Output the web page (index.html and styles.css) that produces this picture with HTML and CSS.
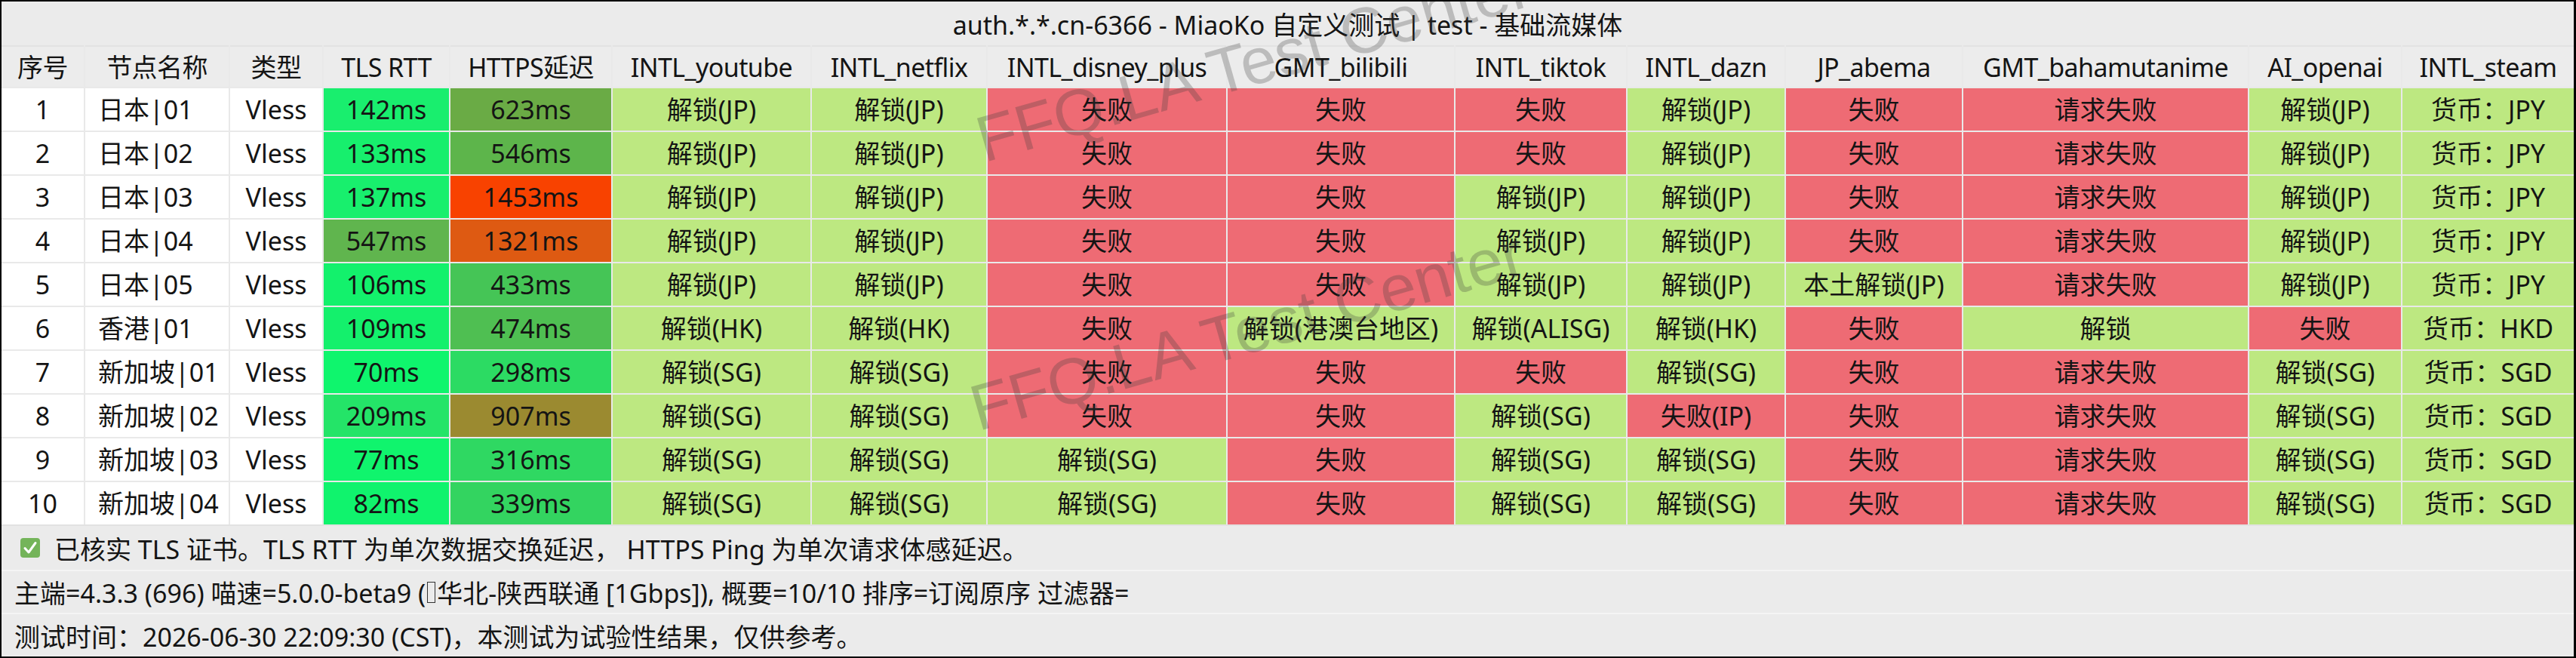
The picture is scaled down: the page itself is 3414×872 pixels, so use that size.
FILE: index.html
```html
<!DOCTYPE html>
<html lang="zh-CN">
<head>
<meta charset="utf-8">
<title>MiaoKo</title>
<link rel="stylesheet" href="styles.css">
</head>
<body>
<div class="frame">
  <div class="title">auth.*.*.cn-6366 - MiaoKo 自定义测试 | test - 基础流媒体</div>
  <div class="table">
    <div class="c h">序号</div><div class="c h">节点名称</div><div class="c h">类型</div><div class="c h">TLS RTT</div><div class="c h">HTTPS延迟</div><div class="c h">INTL_youtube</div><div class="c h">INTL_netflix</div><div class="c h">INTL_disney_plus</div><div class="c h">GMT_bilibili</div><div class="c h">INTL_tiktok</div><div class="c h">INTL_dazn</div><div class="c h">JP_abema</div><div class="c h">GMT_bahamutanime</div><div class="c h">AI_openai</div><div class="c h">INTL_steam</div>

    <div class="c w">1</div><div class="c w name">日本|01</div><div class="c w">Vless</div><div class="c" style="background:#19ee6e">142ms</div><div class="c" style="background:#6aab45">623ms</div><div class="c ok">解锁(JP)</div><div class="c ok">解锁(JP)</div><div class="c no">失败</div><div class="c no">失败</div><div class="c no">失败</div><div class="c ok">解锁(JP)</div><div class="c no">失败</div><div class="c no">请求失败</div><div class="c ok">解锁(JP)</div><div class="c ok">货币：JPY</div>

    <div class="c w">2</div><div class="c w name">日本|02</div><div class="c w">Vless</div><div class="c" style="background:#17ef6d">133ms</div><div class="c" style="background:#5db54b">546ms</div><div class="c ok">解锁(JP)</div><div class="c ok">解锁(JP)</div><div class="c no">失败</div><div class="c no">失败</div><div class="c no">失败</div><div class="c ok">解锁(JP)</div><div class="c no">失败</div><div class="c no">请求失败</div><div class="c ok">解锁(JP)</div><div class="c ok">货币：JPY</div>

    <div class="c w">3</div><div class="c w name">日本|03</div><div class="c w">Vless</div><div class="c" style="background:#18ef6d">137ms</div><div class="c" style="background:#f84200">1453ms</div><div class="c ok">解锁(JP)</div><div class="c ok">解锁(JP)</div><div class="c no">失败</div><div class="c no">失败</div><div class="c ok">解锁(JP)</div><div class="c ok">解锁(JP)</div><div class="c no">失败</div><div class="c no">请求失败</div><div class="c ok">解锁(JP)</div><div class="c ok">货币：JPY</div>

    <div class="c w">4</div><div class="c w name">日本|04</div><div class="c w">Vless</div><div class="c" style="background:#60b54e">547ms</div><div class="c" style="background:#de5a12">1321ms</div><div class="c ok">解锁(JP)</div><div class="c ok">解锁(JP)</div><div class="c no">失败</div><div class="c no">失败</div><div class="c ok">解锁(JP)</div><div class="c ok">解锁(JP)</div><div class="c no">失败</div><div class="c no">请求失败</div><div class="c ok">解锁(JP)</div><div class="c ok">货币：JPY</div>

    <div class="c w">5</div><div class="c w name">日本|05</div><div class="c w">Vless</div><div class="c" style="background:#13f16c">106ms</div><div class="c" style="background:#45c556">433ms</div><div class="c ok">解锁(JP)</div><div class="c ok">解锁(JP)</div><div class="c no">失败</div><div class="c no">失败</div><div class="c ok">解锁(JP)</div><div class="c ok">解锁(JP)</div><div class="c ok">本土解锁(JP)</div><div class="c no">请求失败</div><div class="c ok">解锁(JP)</div><div class="c ok">货币：JPY</div>

    <div class="c w">6</div><div class="c w name">香港|01</div><div class="c w">Vless</div><div class="c" style="background:#14f06c">109ms</div><div class="c" style="background:#4fbf52">474ms</div><div class="c ok">解锁(HK)</div><div class="c ok">解锁(HK)</div><div class="c no">失败</div><div class="c ok">解锁(港澳台地区)</div><div class="c ok">解锁(ALISG)</div><div class="c ok">解锁(HK)</div><div class="c no">失败</div><div class="c ok">解锁</div><div class="c no">失败</div><div class="c ok">货币：HKD</div>

    <div class="c w">7</div><div class="c w name">新加坡|01</div><div class="c w">Vless</div><div class="c" style="background:#0ff56d">70ms</div><div class="c" style="background:#2cdb63">298ms</div><div class="c ok">解锁(SG)</div><div class="c ok">解锁(SG)</div><div class="c no">失败</div><div class="c no">失败</div><div class="c no">失败</div><div class="c ok">解锁(SG)</div><div class="c no">失败</div><div class="c no">请求失败</div><div class="c ok">解锁(SG)</div><div class="c ok">货币：SGD</div>

    <div class="c w">8</div><div class="c w name">新加坡|02</div><div class="c w">Vless</div><div class="c" style="background:#24e468">209ms</div><div class="c" style="background:#9b8a30">907ms</div><div class="c ok">解锁(SG)</div><div class="c ok">解锁(SG)</div><div class="c no">失败</div><div class="c no">失败</div><div class="c ok">解锁(SG)</div><div class="c no">失败(IP)</div><div class="c no">失败</div><div class="c no">请求失败</div><div class="c ok">解锁(SG)</div><div class="c ok">货币：SGD</div>

    <div class="c w">9</div><div class="c w name">新加坡|03</div><div class="c w">Vless</div><div class="c" style="background:#10f46d">77ms</div><div class="c" style="background:#2fd862">316ms</div><div class="c ok">解锁(SG)</div><div class="c ok">解锁(SG)</div><div class="c ok">解锁(SG)</div><div class="c no">失败</div><div class="c ok">解锁(SG)</div><div class="c ok">解锁(SG)</div><div class="c no">失败</div><div class="c no">请求失败</div><div class="c ok">解锁(SG)</div><div class="c ok">货币：SGD</div>

    <div class="c w">10</div><div class="c w name">新加坡|04</div><div class="c w">Vless</div><div class="c" style="background:#10f36d">82ms</div><div class="c" style="background:#33d460">339ms</div><div class="c ok">解锁(SG)</div><div class="c ok">解锁(SG)</div><div class="c ok">解锁(SG)</div><div class="c no">失败</div><div class="c ok">解锁(SG)</div><div class="c ok">解锁(SG)</div><div class="c no">失败</div><div class="c no">请求失败</div><div class="c ok">解锁(SG)</div><div class="c ok">货币：SGD</div>
  </div>
  <div class="footer">
    <div class="fline"><svg class="check" viewBox="0 0 26 26" width="26" height="26"><rect x="0" y="0" width="26" height="26" rx="4" fill="#74b45a"/><path d="M6 13.5 L11 19 L20 6.5" fill="none" stroke="#fff" stroke-width="3" stroke-linecap="round" stroke-linejoin="round"/></svg>已核实 TLS 证书。TLS RTT 为单次数据交换延迟， HTTPS Ping 为单次请求体感延迟。</div>
    <div class="fline">主端=4.3.3 (696) 喵速=5.0.0-beta9 (<span class="tofu"></span>华北-陕西联通 [1Gbps]), 概要=10/10 排序=订阅原序 过滤器=</div>
    <div class="fline">测试时间：2026-06-30 22:09:30 (CST)，本测试为试验性结果，仅供参考。</div>
  </div>
  <div class="watermark wm1">FFQ.LA Test Center</div>
  <div class="watermark wm2">FFQ.LA Test Center</div>
</div>
</body>
</html>
```

FILE: styles.css
```css
html, body {
  margin: 0;
  padding: 0;
  background: #000;
}
.frame {
  position: relative;
  box-sizing: border-box;
  width: 3414px;
  height: 872px;
  border: 2px solid #000;
  border-right-width: 3px;
  background: #ebebeb;
  overflow: hidden;
  font-family: "Noto Sans", "Noto Sans CJK SC", sans-serif;
  font-size: 34px;
  color: #141414;
}
.title {
  height: 58px;
  display: flex;
  align-items: center;
  justify-content: center;
  background: #ebebeb;
}
.table {
  display: grid;
  grid-template-columns: 109px 190px 122px 166px 213px 262px 231px 316px 300px 226px 208px 233px 377px 201px 1fr;
  grid-template-rows: 55px repeat(10, 56px);
  gap: 2px;
  background: #e9e9e9;
}
.c {
  display: flex;
  align-items: center;
  justify-content: center;
  white-space: nowrap;
  line-height: 1;
  min-width: 0;
}
.h {
  background: #ececec;
  border-top: 2px solid #e2e2e2;
  letter-spacing: -0.6px;
}
.w { background: #ffffff; }
.name {
  justify-content: flex-start;
  padding-left: 17px;
}
.ok { background: #bde881; }
.no { background: #ee6b74; }
.footer {
  border-top: 2px solid #e2e2e2;
  display: flex;
  flex-direction: column;
}
.fline {
  display: flex;
  align-items: center;
  height: 58px;
  padding-left: 17px;
  background: #ebebeb;
  white-space: nowrap;
}
.fline + .fline {
  border-top: 2px solid #f4f4f4;
  height: 56px;
}
.fline:nth-child(2) { height: 55px; }
.check {
  margin-left: 8px;
  margin-right: 19px;
  flex: none;
}
.tofu {
  display: inline-block;
  width: 11px;
  height: 28px;
  border: 1px solid #333;
  box-sizing: border-box;
  margin: 0 2px;
}
.watermark {
  position: absolute;
  font-family: "Liberation Sans", Arial, sans-serif;
  font-size: 86px;
  color: rgba(60, 60, 60, 0.27);
  white-space: nowrap;
  transform-origin: 0 100%;
  transform: rotate(-16deg);
  line-height: 1;
  pointer-events: none;
}
.wm1 { left: 1306px; top: 140px; }
.wm2 { left: 1298px; top: 496px; }
```
